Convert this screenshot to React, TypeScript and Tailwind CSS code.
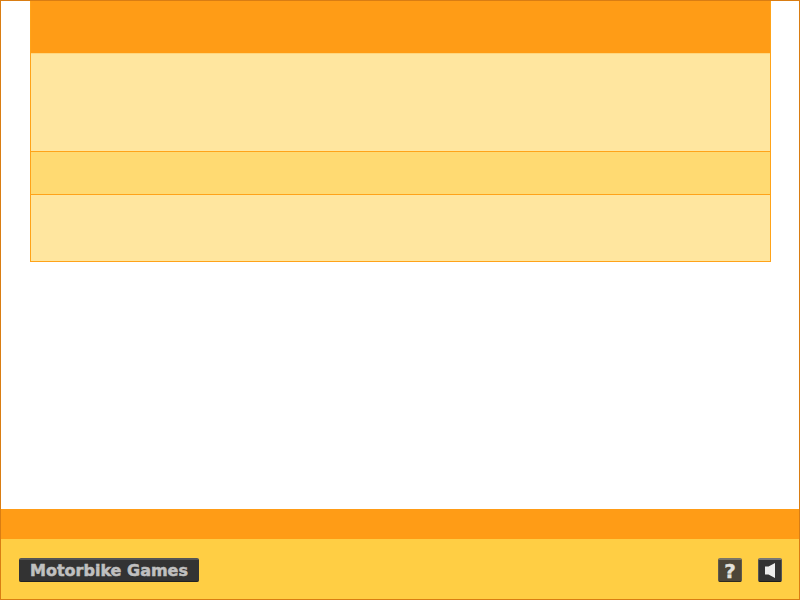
export default function App() {
  return (
    <div className="w-[800px] h-[600px] flex flex-col border border-[#d97d13] bg-white overflow-hidden">
      <main className="flex-1 px-[29px]">
        <div className="w-[741px] flex flex-col border-x border-b border-[#ffa319]">
          <div className="h-[52px] bg-[#ff9c16]" />
          <div className="h-[98px] bg-[#ffe69f] border-t border-[#ffd77f]" />
          <div className="h-[43px] bg-[#ffda72] border-t border-[#ffa319]" />
          <div className="h-[67px] bg-[#ffe69f] border-t border-[#ffa319]" />
        </div>
      </main>
      <footer className="shrink-0">
        <div className="h-[30px] bg-[#ff9c16]" />
        <div className="h-[60px] bg-[#ffce44] flex items-center justify-between pl-[18px] pr-[17px] pt-[2px]">
          <div className="w-[180px] h-[24px] rounded-[2px] bg-[#333333] border-t-2 border-t-[#555555] border-b border-b-[#222222] flex items-center justify-center pt-[1px]">
            <span className="text-[16px] font-bold text-[#c0c0c0] leading-none [-webkit-text-stroke:0.5px_#c0c0c0] font-['DejaVu_Sans',sans-serif]">Motorbike Games</span>
          </div>
          <div className="flex items-center gap-[16px]">
            <div className="w-[24px] h-[24px] rounded-[2px] bg-[#4d4638] border-t-2 border-x border-t-[#7a7568] border-x-[#5f594c] border-b border-b-[#2e2a20] flex items-center justify-center">
              <span className="text-[20px] font-bold text-[#e4e2dc] leading-none [-webkit-text-stroke:0.4px_#e4e2dc] font-['DejaVu_Sans',sans-serif]">?</span>
            </div>
            <div className="w-[24px] h-[24px] rounded-[2px] bg-[#333333] border-t-2 border-x border-t-[#777777] border-x-[#555555] border-b border-b-[#1c1c1c] flex items-center justify-center">
              <svg width="10" height="15" viewBox="0 0 10 15">
                <path d="M0 3.5 H3.5 L10 0 V15 L3.5 11.5 H0 Z" fill="#ececec" />
              </svg>
            </div>
          </div>
        </div>
      </footer>
    </div>
  );
}
